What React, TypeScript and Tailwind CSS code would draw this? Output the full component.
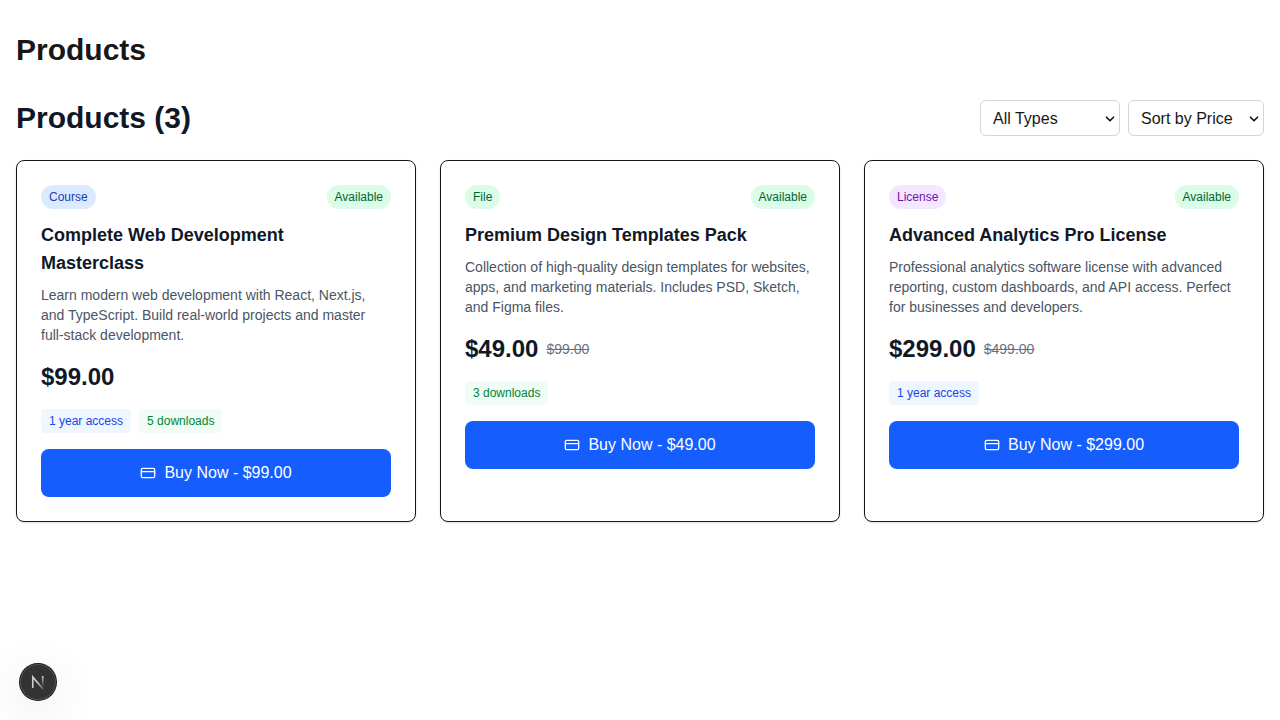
import { ChevronDown, CreditCard } from "lucide-react";

const products = [
  {
    type: "Course",
    badge: "bg-blue-100 text-blue-800",
    title: "Complete Web Development Masterclass",
    text: "Learn modern web development with React, Next.js, and TypeScript. Build real-world projects and master full-stack development.",
    price: "$99.00",
    old: "",
    access: "1 year access",
    downloads: "5 downloads",
  },
  {
    type: "File",
    badge: "bg-green-100 text-green-800",
    title: "Premium Design Templates Pack",
    text: "Collection of high-quality design templates for websites, apps, and marketing materials. Includes PSD, Sketch, and Figma files.",
    price: "$49.00",
    old: "$99.00",
    access: "",
    downloads: "3 downloads",
  },
  {
    type: "License",
    badge: "bg-purple-100 text-purple-800",
    title: "Advanced Analytics Pro License",
    text: "Professional analytics software license with advanced reporting, custom dashboards, and API access. Perfect for businesses and developers.",
    price: "$299.00",
    old: "$499.00",
    access: "1 year access",
    downloads: "",
  },
];

type Product = (typeof products)[number];

function ProductCard({ product }: { product: Product }) {
  return (
    <article className="rounded-lg border border-[#171717] bg-white p-6 shadow-sm">
      <div className="mb-3 flex items-start justify-between">
        <span className={`rounded-full px-2 py-1 text-xs font-medium ${product.badge}`}>{product.type}</span>
        <span className="rounded-full bg-green-100 px-2 py-1 text-xs font-medium text-green-800">Available</span>
      </div>
      <h3 className="mb-2 text-lg font-semibold text-gray-900">{product.title}</h3>
      <p className="mb-4 text-sm text-gray-600">{product.text}</p>
      <div className="mb-4 flex items-center gap-2">
        <span className="text-2xl font-bold text-gray-900">{product.price}</span>
        {product.old && <span className="text-sm text-gray-500 line-through">{product.old}</span>}
      </div>
      <div className="mb-4 flex flex-wrap gap-2 text-xs">
        {product.access && <span className="rounded bg-blue-50 px-2 py-1 text-blue-700">{product.access}</span>}
        {product.downloads && <span className="rounded bg-green-50 px-2 py-1 text-green-700">{product.downloads}</span>}
      </div>
      <button
        type="button"
        className="flex w-full items-center justify-center gap-2 rounded-lg bg-blue-600 px-4 py-3 font-medium text-white hover:bg-blue-700"
      >
        <CreditCard className="size-4" aria-hidden="true" />
        Buy Now - {product.price}
      </button>
    </article>
  );
}

function Select({ label, options, width }: { label: string; options: string[]; width: string }) {
  return (
    <div className={`relative ${width}`}>
      <select
        aria-label={label}
        className="h-9 w-full appearance-none rounded-md border border-gray-300 bg-white px-3 pt-0.5 text-[#171717]"
      >
        {options.map((option) => (
          <option key={option}>{option}</option>
        ))}
      </select>
      <ChevronDown
        className="pointer-events-none absolute top-3 right-[3px] size-3.5 text-[#171717]"
        strokeWidth={3}
        aria-hidden="true"
      />
    </div>
  );
}

export default function App() {
  return (
    <div className="min-h-screen bg-white font-[Arial,Helvetica,'Liberation_Sans',sans-serif] text-[#171717]">
      <main className="container mx-auto px-4 py-8">
        <h1 className="mb-8 text-3xl font-bold">Products</h1>
        <div className="mb-6 flex items-center justify-between">
          <h2 className="text-3xl font-bold text-gray-900">Products (3)</h2>
          <div className="flex gap-2">
            <Select label="Product type" options={["All Types", "Course", "File", "License"]} width="w-35" />
            <Select label="Sort order" options={["Sort by Price", "Sort by Name"]} width="w-34" />
          </div>
        </div>
        <div className="grid grid-cols-1 gap-6 sm:grid-cols-2 lg:grid-cols-3">
          {products.map((product) => (
            <ProductCard key={product.title} product={product} />
          ))}
        </div>
      </main>
      <button
        type="button"
        aria-label="Open developer tools"
        className="fixed bottom-5 left-5 flex size-9 items-center justify-center rounded-full bg-[#333] shadow-[0_0_0_1px_#171717,inset_0_0_0_1px_#4f4f4f,0_12px_48px_rgba(0,0,0,0.12)]"
      >
        <svg className="size-10 shrink-0" viewBox="0 0 40 40" fill="none" aria-hidden="true">
          <defs>
            <linearGradient id="diagonal" x1="20" y1="20" x2="26" y2="28" gradientUnits="userSpaceOnUse">
              <stop stopColor="#cfcfcf" />
              <stop offset="1" stopColor="#cfcfcf" stopOpacity="0.2" />
            </linearGradient>
            <linearGradient id="stem" x1="25" y1="14" x2="25" y2="25" gradientUnits="userSpaceOnUse">
              <stop stopColor="#cfcfcf" />
              <stop offset="1" stopColor="#cfcfcf" stopOpacity="0" />
            </linearGradient>
          </defs>
          <path d="M14.75 26V15L25 27" stroke="url(#diagonal)" strokeWidth="1.6" />
          <path d="M23.9 14h1.6v11h-1.6z" fill="url(#stem)" />
        </svg>
      </button>
    </div>
  );
}
